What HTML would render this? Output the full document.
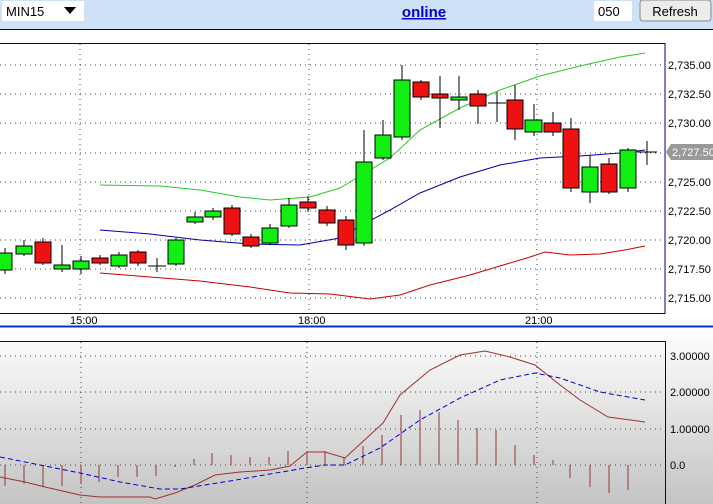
<!DOCTYPE html><html><head><style>
body{margin:0;width:713px;height:504px;overflow:hidden;font-family:"Liberation Sans",sans-serif;background:#fff}
</style></head><body>
<svg width="713" height="504" xmlns="http://www.w3.org/2000/svg" style="position:absolute;left:0;top:0" font-family="Liberation Sans, sans-serif">
<defs><linearGradient id="g" x1="0" y1="0" x2="0" y2="1"><stop offset="0" stop-color="#fff"/><stop offset="1" stop-color="#c4c4c4"/></linearGradient></defs>
<rect x="0" y="0" width="713" height="29" fill="#cfe1f7"/>
<rect x="2" y="1" width="82" height="20" fill="#fff"/>
<text x="6" y="16" font-size="13">MIN15</text>
<polygon points="64,7 76,7 70,14" fill="#000"/>
<text x="424" y="17" font-size="15" font-weight="bold" fill="#0000cc" text-anchor="middle" text-decoration="underline">online</text>
<rect x="594" y="1" width="38" height="20" fill="#fff"/>
<text x="598" y="16" font-size="13">050</text>
<rect x="640" y="0" width="71" height="21" rx="3" fill="#ececec" stroke="#888"/>
<text x="675" y="16" font-size="13" text-anchor="middle">Refresh</text>
<line x1="0" y1="29.5" x2="713" y2="29.5" stroke="#000080"/>
<rect x="-1" y="43.5" width="666" height="270" fill="#fff" stroke="#000080"/>
<g stroke="#444" stroke-dasharray="1,4">
<line x1="0" y1="65" x2="663" y2="65"/><line x1="0" y1="94" x2="663" y2="94"/><line x1="0" y1="123" x2="663" y2="123"/><line x1="0" y1="153" x2="663" y2="153"/><line x1="0" y1="182" x2="663" y2="182"/><line x1="0" y1="211" x2="663" y2="211"/><line x1="0" y1="240" x2="663" y2="240"/><line x1="0" y1="269" x2="663" y2="269"/><line x1="0" y1="298" x2="663" y2="298"/>
<line x1="80" y1="44" x2="80" y2="313"/><line x1="309" y1="44" x2="309" y2="313"/><line x1="537" y1="44" x2="537" y2="313"/>
</g>
<g font-size="11" fill="#000">
<text x="668" y="69">2,735.00</text><text x="668" y="98">2,732.50</text><text x="668" y="127">2,730.00</text><text x="668" y="186">2,725.00</text><text x="668" y="215">2,722.50</text><text x="668" y="244">2,720.00</text><text x="668" y="273">2,717.50</text><text x="668" y="302">2,715.00</text>
<text x="70" y="324">15:00</text><text x="298" y="324">18:00</text><text x="525" y="324">21:00</text>
</g>
<polygon points="666,152 671,144 713,144 713,160 671,160" fill="#999"/>
<text x="672" y="156" font-size="11" fill="#fff">2,727.50</text>
<polyline fill="none" stroke="#22cc22" points="100,185 160,186 200,190 240,197 270,200 310,197 340,188 370,170 390,158 420,130 460,108 500,90 540,76 580,66 620,57 645,53"/>
<polyline fill="none" stroke="#0000aa" points="100,230 150,234 200,240 250,244 300,245 340,238 360,226 390,210 420,193 460,177 500,165 540,158 580,156 620,153 645,150"/>
<polyline fill="none" stroke="#cc0000" points="100,273 150,277 200,281 250,287 290,293 330,294 370,299 400,295 430,285 470,275 500,266 530,257 545,252 570,255 600,254 625,250 645,246"/>
<g stroke="#000" stroke-width="1">
<path d="M5,248V274M24,240V256M43,238V265M62,245V272M81,256V274M100,255V265M119,252V268M138,250V266M157,258V272M148,266H166M176,238V266M195,212V224M213,208V220M232,205V236M251,234V248M270,224V245M289,198V228M308,196V212M327,206V226M346,216V250M364,130V246M383,120V160M402,65V140M421,80V100M440,76V128M459,76V110M478,90V124M497,92V122M488,103H506M515,85V140M534,104V136M553,112V136M571,118V192M590,155V203M609,158V194M628,148V192M647,141V165M637,152H657"/>
</g>
<g stroke="#000">
<rect x="-3" y="253" width="15" height="17" fill="#1e1"/>
<rect x="16" y="246" width="16" height="8" fill="#1e1"/>
<rect x="35" y="242" width="16" height="21" fill="#e11"/>
<rect x="54" y="265" width="16" height="4" fill="#1e1"/>
<rect x="73" y="261" width="16" height="8" fill="#1e1"/>
<rect x="92" y="258" width="16" height="5" fill="#e11"/>
<rect x="111" y="255" width="16" height="11" fill="#1e1"/>
<rect x="130" y="252" width="16" height="11" fill="#e11"/>
<rect x="168" y="240" width="16" height="24" fill="#1e1"/>
<rect x="187" y="217" width="16" height="5" fill="#1e1"/>
<rect x="205" y="211" width="16" height="6" fill="#1e1"/>
<rect x="224" y="208" width="16" height="26" fill="#e11"/>
<rect x="243" y="237" width="16" height="9" fill="#e11"/>
<rect x="262" y="228" width="16" height="15" fill="#1e1"/>
<rect x="281" y="205" width="16" height="21" fill="#1e1"/>
<rect x="300" y="202" width="16" height="6" fill="#e11"/>
<rect x="319" y="210" width="16" height="13" fill="#e11"/>
<rect x="338" y="220" width="16" height="25" fill="#e11"/>
<rect x="356" y="162" width="16" height="81" fill="#1e1"/>
<rect x="375" y="135" width="16" height="23" fill="#1e1"/>
<rect x="394" y="80" width="16" height="57" fill="#1e1"/>
<rect x="413" y="82" width="16" height="15" fill="#e11"/>
<rect x="432" y="94" width="16" height="4" fill="#e11"/>
<rect x="451" y="97" width="16" height="3" fill="#1e1"/>
<rect x="470" y="94" width="16" height="12" fill="#e11"/>
<rect x="507" y="100" width="16" height="29" fill="#e11"/>
<rect x="525" y="120" width="17" height="12" fill="#1e1"/>
<rect x="544" y="123" width="17" height="9" fill="#e11"/>
<rect x="563" y="129" width="16" height="59" fill="#e11"/>
<rect x="582" y="167" width="16" height="25" fill="#1e1"/>
<rect x="601" y="164" width="16" height="28" fill="#e11"/>
<rect x="620" y="150" width="16" height="38" fill="#1e1"/>
</g>
<rect x="0" y="327" width="713" height="177" fill="url(#g)"/>
<line x1="0" y1="326.5" x2="713" y2="326.5" stroke="#0033cc" stroke-width="2"/>
<path d="M0,341.5H665.5V504" fill="none" stroke="#000080"/>
<g stroke="#444" stroke-dasharray="1,4">
<line x1="0" y1="356" x2="663" y2="356"/><line x1="0" y1="392" x2="663" y2="392"/><line x1="0" y1="429" x2="663" y2="429"/><line x1="0" y1="465" x2="663" y2="465"/>
<line x1="81" y1="342" x2="81" y2="504"/><line x1="307" y1="342" x2="307" y2="504"/><line x1="537" y1="342" x2="537" y2="504"/>
</g>
<g font-size="11"><text x="670" y="360">3.00000</text><text x="670" y="396">2.00000</text><text x="670" y="433">1.00000</text><text x="670" y="469">0.0</text></g>
<path stroke="#993333" d="M5,465V486M24,465V484M43,465V486M62,465V486M81,465V484M99,465V482M118,465V477M137,465V477M156,465V476M175,465V467M194,465V459M212,465V453M231,465V455M250,465V457M269,465V457M288,465V451M307,465V451M325,465V451M344,465V457M363,465V446M382,465V435M401,465V415M420,465V410M439,465V412M458,465V420M477,465V428M496,465V430M515,465V445M534,465V455M553,465V460M570,465V478M590,465V487M609,465V493M628,465V490"/>
<polyline fill="none" stroke="#a03030" points="0,477 25,482 45,487 80,495 100,497 150,497 155,499 175,493 195,485 215,475 240,472 270,470 290,466 307,452 325,452 345,458 383,423 400,395 430,370 460,355 485,351 510,357 535,365 560,385 580,400 608,417 645,422"/>
<polyline fill="none" stroke="#0000cc" stroke-dasharray="5,3" points="0,457 40,465 80,473 120,482 160,489 180,489 230,481 270,474 305,468 325,465 345,465 380,448 420,420 460,398 500,380 535,373 560,378 600,392 645,400"/>
</svg>
</body></html>
